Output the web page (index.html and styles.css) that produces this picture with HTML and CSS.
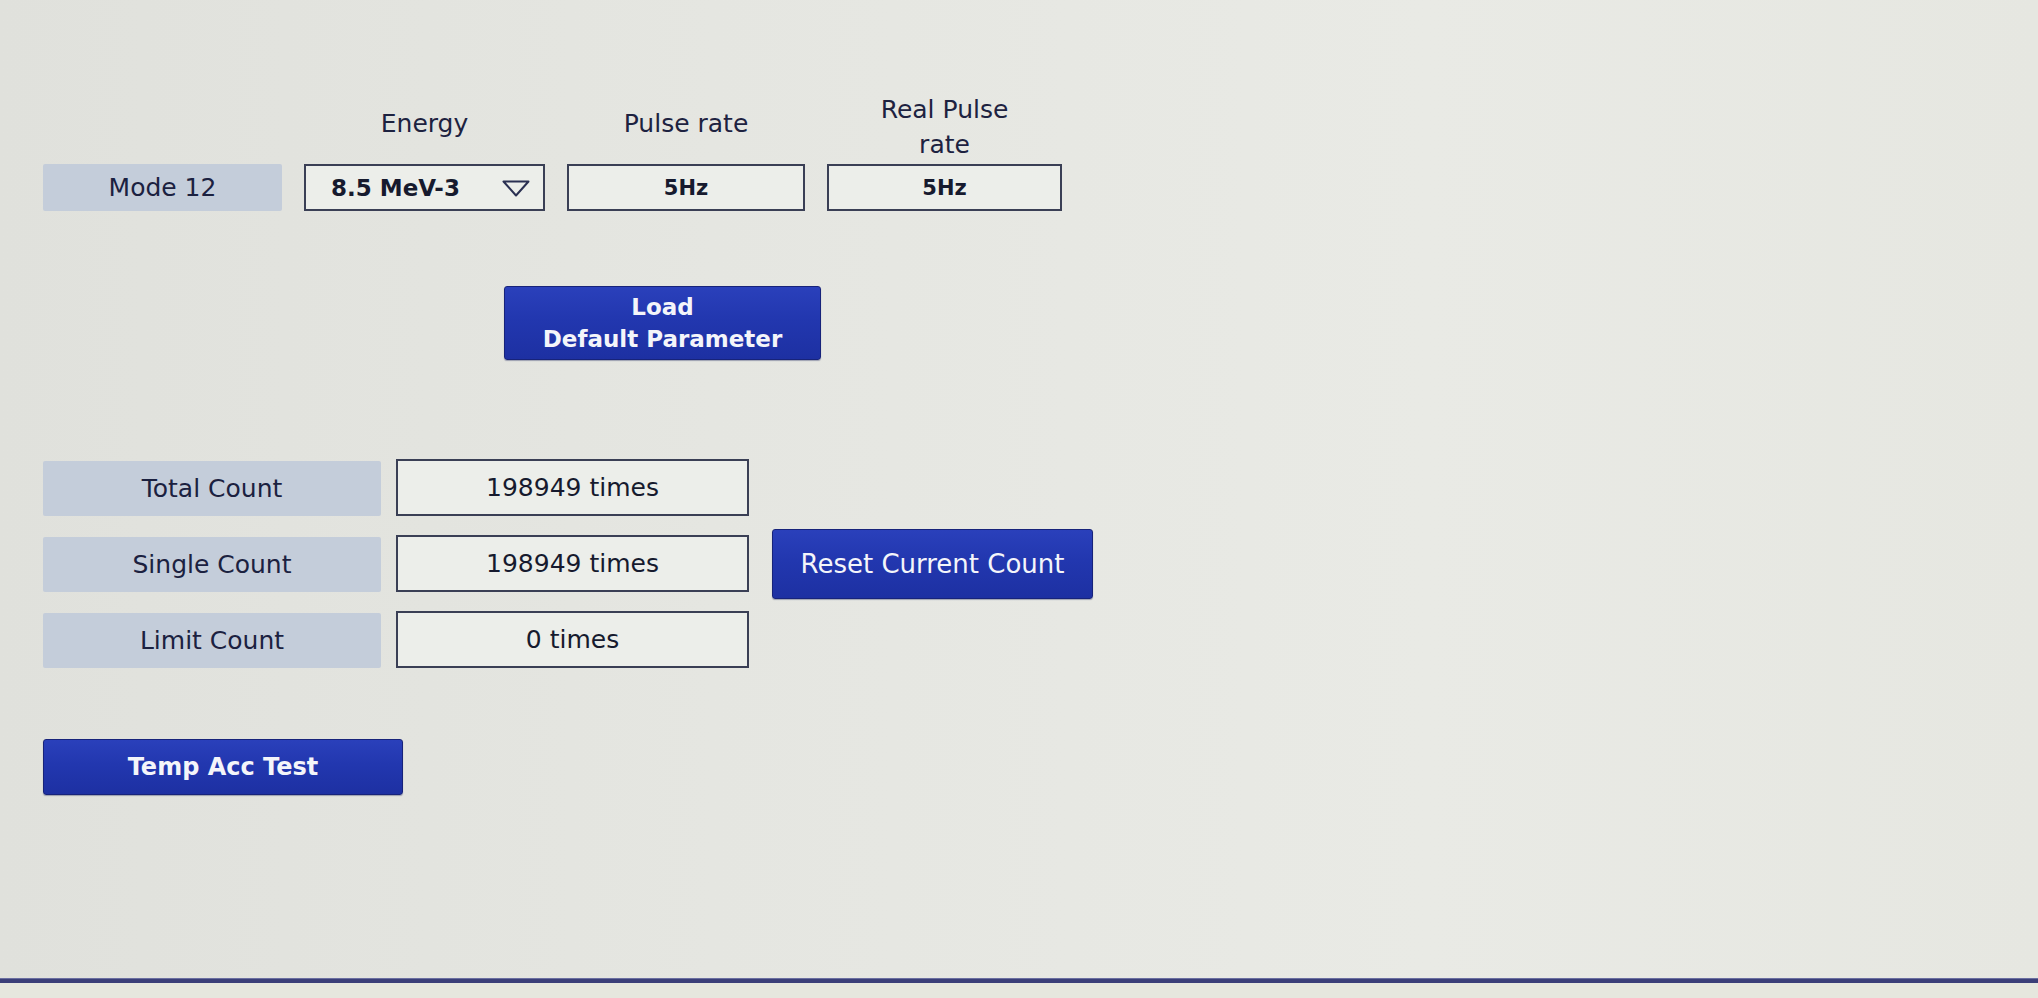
FILE: index.html
```html
<!DOCTYPE html>
<html lang="en">
<head>
<meta charset="utf-8">
<title>Mode 12</title>
<link rel="stylesheet" href="styles.css">
</head>
<body>
<div class="screen">
  <main class="panel">
    <section class="mode-grid">
      <div class="hdr"></div>
      <div class="hdr single">Energy</div>
      <div class="hdr single">Pulse rate</div>
      <div class="hdr">Real Pulse<br>rate</div>

      <div class="label">Mode 12</div>
      <div class="field select">
        <span>8.5 MeV-3</span>
        <svg class="caret" width="28" height="17" viewBox="0 0 28 17"><polygon points="1.5,1.5 26.5,1.5 14,15.5" fill="none" stroke="#2a3052" stroke-width="2" stroke-linejoin="round"/></svg>
      </div>
      <div class="field small">5Hz</div>
      <div class="field small">5Hz</div>
    </section>

    <div class="load-row">
      <button class="btn load">Load<br>Default Parameter</button>
    </div>

    <section class="count-grid">
      <div class="label wide">Total Count</div>
      <div class="field value">198949 times</div>
      <div class="spacer"></div>

      <div class="label wide">Single Count</div>
      <div class="field value">198949 times</div>
      <button class="btn reset">Reset Current Count</button>

      <div class="label wide">Limit Count</div>
      <div class="field value">0 times</div>
      <div class="spacer"></div>
    </section>

    <button class="btn temp">Temp Acc Test</button>
  </main>
  <div class="rule"></div>
  <div class="below"></div>
</div>
</body>
</html>
```
FILE: styles.css
```css
html, body {
  margin: 0;
  padding: 0;
}
body {
  font-family: "DejaVu Sans", Verdana, sans-serif;
  color: #1b2038;
  background: #e4e5e0;
}
.screen {
  height: 998px;
  display: flex;
  flex-direction: column;
  background: linear-gradient(90deg, #e0e1dc 0%, #e5e6e1 35%, #e9eae5 70%, #e6e7e1 100%);
  overflow: hidden;
}
.panel {
  padding: 92px 0 0 43px;
  display: flex;
  flex-direction: column;
  align-items: flex-start;
}
.mode-grid {
  display: grid;
  grid-template-columns: 239px 241px 238px 235px;
  grid-template-rows: 69px 47px;
  column-gap: 22px;
  row-gap: 3px;
}
.hdr {
  display: flex;
  align-items: center;
  justify-content: center;
  text-align: center;
  font-size: 25px;
  line-height: 35px;
  color: #1d2240;
}
.hdr.single {
  padding-bottom: 6px;
}
.label {
  background: #c4cdda;
  display: flex;
  align-items: center;
  justify-content: center;
  font-size: 25px;
  color: #1b2140;
  border-radius: 2px;
}
.field {
  box-sizing: border-box;
  border: 2px solid #3a3f55;
  background: #eceeea;
  display: flex;
  align-items: center;
  justify-content: center;
  color: #161a2e;
}
.select {
  justify-content: space-between;
  padding: 0 13px 0 25px;
  font-weight: bold;
  font-size: 23px;
}
.caret {
  margin-top: 2px;
}
.small {
  font-weight: bold;
  font-size: 21px;
}
.btn {
  font-family: "DejaVu Sans", Verdana, sans-serif;
  color: #f4f5fa;
  background: linear-gradient(180deg, #2a40bb 0%, #2237af 45%, #1d30a2 100%);
  border: 1px solid #17237a;
  border-radius: 3px;
  padding: 0;
  box-shadow: 0 1px 1px rgba(20, 30, 90, 0.35);
}
.load-row {
  margin-top: 75px;
  padding-left: 461px;
}
.load {
  width: 317px;
  height: 74px;
  font-weight: bold;
  font-size: 23px;
  line-height: 32px;
}
.count-grid {
  margin-top: 101px;
  display: grid;
  grid-template-columns: 338px 353px 321px;
  grid-template-rows: 55px 55px 55px;
  column-gap: 15px;
  row-gap: 21px;
}
.value {
  font-size: 25px;
  margin: -2px 0 0;
  height: 57px;
}
.reset {
  align-self: start;
  margin: -8px 0 0 8px;
  width: 321px;
  height: 70px;
  font-size: 26px;
}
.temp {
  margin-top: 71px;
  width: 360px;
  height: 56px;
  font-weight: bold;
  font-size: 24px;
}
.rule {
  margin-top: auto;
  height: 4px;
  background: #3b3f78;
  border-top: 1px solid #6b6fa0;
}
.below {
  height: 15px;
  background: #e6e7de;
}
```
